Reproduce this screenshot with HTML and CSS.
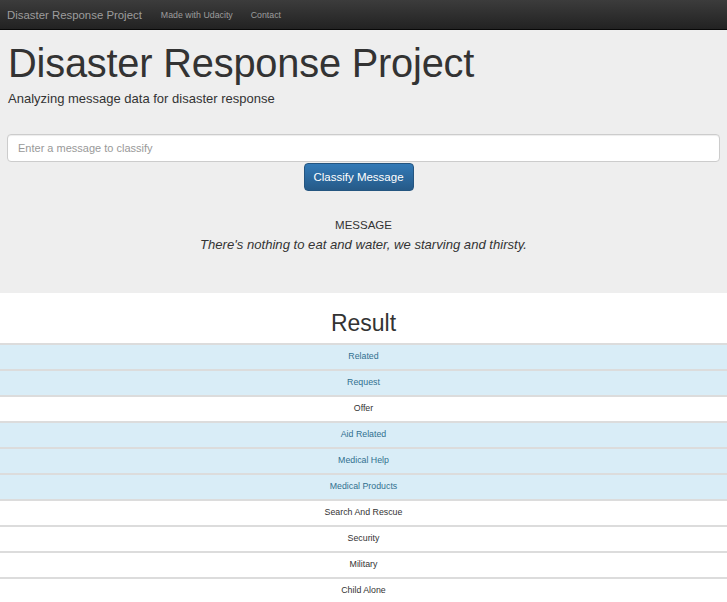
FILE: index.html
```html
<!DOCTYPE html>
<html>
<head>
<meta charset="utf-8">
<title>Disaster Response Project</title>
<link rel="stylesheet" href="styles.css">
</head>
<body>
<nav class="navbar">
  <a class="brand" href="#">Disaster Response Project</a>
  <a class="nav-link" href="#">Made with Udacity</a>
  <a class="nav-link" href="#">Contact</a>
</nav>
<section class="jumbotron">
  <h1 class="title">Disaster Response Project</h1>
  <p class="subtitle">Analyzing message data for disaster response</p>
  <form class="classify-form">
    <input class="msg-input" type="text" placeholder="Enter a message to classify">
    <div class="btn-row"><button class="btn-primary" type="button">Classify Message</button></div>
  </form>
  <div class="message">
    <div class="message-label">MESSAGE</div>
    <div class="message-text">There's nothing to eat and water, we starving and thirsty.</div>
  </div>
</section>
<section class="results">
  <h2 class="result-title">Result</h2>
  <ul class="result-list">
    <li class="row info">Related</li>
    <li class="row info">Request</li>
    <li class="row">Offer</li>
    <li class="row info">Aid Related</li>
    <li class="row info">Medical Help</li>
    <li class="row info">Medical Products</li>
    <li class="row">Search And Rescue</li>
    <li class="row">Security</li>
    <li class="row">Military</li>
    <li class="row">Child Alone</li>
  </ul>
</section>
</body>
</html>
```
FILE: styles.css
```css
html, body {
  margin: 0;
  padding: 0;
  background: #fff;
  font-family: "Liberation Sans", Arial, sans-serif;
  color: #333;
}

.navbar {
  height: 29px;
  display: flex;
  align-items: center;
  padding: 0 7px;
  background: linear-gradient(to bottom, #3c3c3c 0%, #222 100%);
  border-bottom: 1px solid #080808;
}

.brand {
  color: #9d9d9d;
  font-size: 11.4px;
  text-decoration: none;
  margin-right: 19px;
}

.nav-link {
  color: #9d9d9d;
  font-size: 8.8px;
  text-decoration: none;
  margin-right: 18px;
}

.jumbotron {
  box-sizing: border-box;
  background: #eee;
  padding: 11px 7px 0;
  height: 263px;
}

.title {
  margin: 0;
  font-size: 39.8px;
  font-weight: 400;
  line-height: 44px;
  letter-spacing: -0.2px;
  padding-left: 1px;
}

.subtitle {
  margin: 6px 0 0 1px;
  font-size: 13px;
  line-height: 16px;
}

.classify-form {
  margin-top: 27px;
}

.msg-input {
  display: block;
  box-sizing: border-box;
  width: 713px;
  height: 28px;
  padding: 0 10px;
  border: 1px solid #ccc;
  border-radius: 4px;
  background: #fff;
  font-family: "Liberation Sans", Arial, sans-serif;
  font-size: 11px;
  color: #555;
  box-shadow: inset 0 1px 1px rgba(0,0,0,0.075);
}

.msg-input::placeholder {
  color: #999;
}

.btn-row {
  display: flex;
  justify-content: center;
  padding-right: 10px;
  margin-top: 1px;
}

.btn-primary {
  width: 110px;
  height: 28px;
  border: 1px solid #245580;
  border-radius: 4px;
  background: linear-gradient(to bottom, #337ab7 0%, #265a88 100%);
  color: #fff;
  font-family: "Liberation Sans", Arial, sans-serif;
  font-size: 11.5px;
  padding: 0;
}

.message {
  margin-top: 27px;
  text-align: center;
}

.message-label {
  font-size: 11.5px;
  line-height: 14px;
}

.message-text {
  margin-top: 5px;
  font-size: 13.1px;
  font-style: italic;
  line-height: 16px;
}

.results {
  padding-top: 16px;
}

.result-title {
  margin: 0 0 5px;
  text-align: center;
  font-size: 23px;
  font-weight: 400;
  line-height: 29px;
}

.result-list {
  list-style: none;
  margin: 0;
  padding: 0;
}

.row {
  box-sizing: border-box;
  height: 26px;
  padding-bottom: 2px;
  border-top: 2px solid #dcdcdc;
  display: flex;
  align-items: center;
  justify-content: center;
  font-size: 8.8px;
  color: #333;
}

.row.info {
  background: #d9edf7;
  color: #31708f;
}
```
